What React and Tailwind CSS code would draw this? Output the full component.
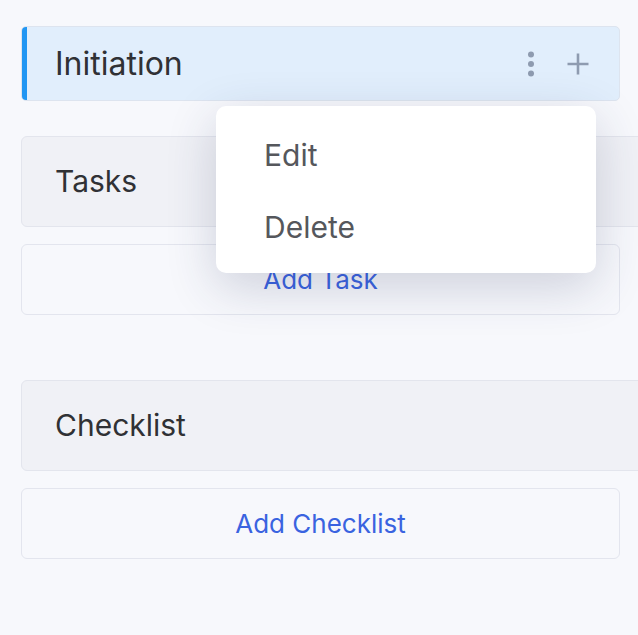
import React from "react";

function DotsIcon() {
  return (
    <svg width="8" height="28" viewBox="0 0 8 28" fill="#8e9bb0">
      <circle cx="4" cy="4.5" r="3" />
      <circle cx="4" cy="14" r="3" />
      <circle cx="4" cy="23.5" r="3" />
    </svg>
  );
}

function PlusIcon() {
  return (
    <svg width="24" height="24" viewBox="0 0 24 24" stroke="#8e9bb0" strokeWidth="2.6" fill="none">
      <path d="M12 1.5v21M1.5 12h21" />
    </svg>
  );
}

function SectionHeader({ title }) {
  return (
    <div className="h-[91px] mr-[-40px] flex items-center pl-[33px] bg-[#f0f1f6] border border-[#e3e5ed] rounded-[6px] text-[30px] text-[#303135]">
      {title}
    </div>
  );
}

function AddButton({ label }) {
  return (
    <button className="h-[71px] w-full flex items-center justify-center bg-[#f7f8fc] border border-[#e3e5ee] rounded-[6px] text-[26px] text-[#3a63e0]">
      {label}
    </button>
  );
}

export default function App() {
  return (
    <div
      className="relative min-h-screen bg-[#f7f8fc] overflow-hidden pt-[26px] pl-[21px] pr-[18px]"
      style={{ fontFamily: "Inter, 'Noto Sans', sans-serif" }}
    >
      {/* phase header */}
      <div className="h-[75px] flex items-center bg-[#e1eefc] border border-[#dde4ef] rounded-[5px] overflow-hidden">
        <div className="w-[5px] self-stretch bg-[#2196f3]" />
        <div className="flex-1 pl-[28px] text-[32px] text-[#303135]">Initiation</div>
        <div className="flex items-center gap-[31px] pr-[29px]">
          <DotsIcon />
          <PlusIcon />
        </div>
      </div>

      <div className="mt-[35px] flex flex-col gap-[17px]">
        <SectionHeader title="Tasks" />
        <AddButton label="Add Task" />
      </div>

      <div className="mt-[65px] flex flex-col gap-[17px]">
        <SectionHeader title="Checklist" />
        <AddButton label="Add Checklist" />
      </div>

      {/* dropdown menu */}
      <div className="absolute left-[216px] top-[106px] w-[380px] bg-white rounded-[10px] pt-[13px] pb-[10px] shadow-[0_14px_50px_rgba(40,50,90,0.2)]">
        <div className="h-[72px] flex items-center pl-[48px] text-[30px] text-[#55575c]">Edit</div>
        <div className="h-[72px] flex items-center pl-[48px] text-[30px] text-[#55575c]">Delete</div>
      </div>
    </div>
  );
}
